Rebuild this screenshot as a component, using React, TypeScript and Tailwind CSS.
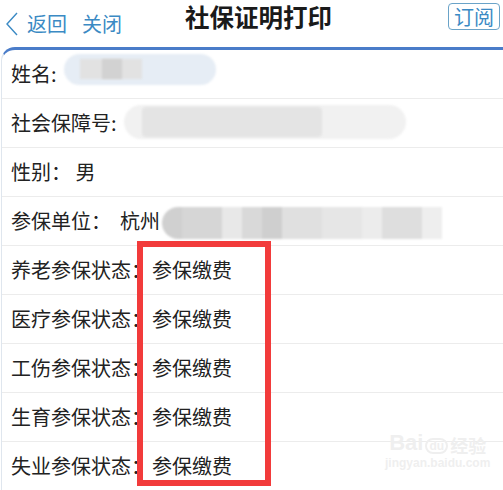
import React from "react";

const font = { fontFamily: '"Noto Sans CJK SC", "Noto Sans", sans-serif' };

function Row({ children, className = "" }: { children: React.ReactNode; className?: string }) {
  return (
    <div className={`relative flex h-[49px] items-center border-b border-[#ececec] pl-[9px] text-[20px] text-[#222] ${className}`}>
      {children}
    </div>
  );
}

export default function App() {
  const statuses = ["养老参保状态：", "医疗参保状态：", "工伤参保状态：", "生育参保状态：", "失业参保状态："];
  return (
    <div className="relative h-[490px] w-[503px] overflow-hidden bg-white" style={font}>
      {/* header */}
      <div className="relative flex h-[47px] items-center">
        <div className="flex items-center pl-[5px] text-[20px] text-[#3b8ac4]">
          <svg width="14" height="24" viewBox="0 0 14 24" className="mr-[8px]">
            <path d="M12 1 L2 12 L12 23" fill="none" stroke="#3b8ac4" strokeWidth="1.4" />
          </svg>
          <span className="leading-none">返回</span>
          <span className="ml-[15px] leading-none">关闭</span>
        </div>
        <div className="absolute left-[185px] top-[1px] text-[24.5px] font-bold leading-[32px] text-[#1a1a1a]">社保证明打印</div>
        <div className="absolute right-[3px] top-[3px] flex h-[27px] w-[52px] items-center justify-center rounded-[4px] border border-[#6aa3c8] text-[20px] leading-none text-[#3b8ac4]">
          订阅
        </div>
      </div>

      {/* content */}
      <div className="ml-[1px] rounded-tl-[14px] border-l border-t-[3px] border-l-[#dfe6ee] border-t-[#4a7cc9]">
        <Row>
          <span>姓名:</span>
          <div className="absolute left-[62px] top-[4px] h-[31px] w-[152px] rounded-full bg-[#e6edf5] blur-[1px]" />
          <div className="absolute left-[78px] top-[9px] h-[20px] w-[62px] bg-[#e2e2e2] blur-[1px]" />
          <div className="absolute left-[100px] top-[9px] h-[20px] w-[20px] bg-[#d2d2d2] blur-[1px]" />
        </Row>
        <Row>
          <span>社会保障号:</span>
          <div className="absolute left-[122px] top-[6px] h-[34px] w-[282px] rounded-full bg-[#f1f1f1] blur-[1px]" />
          <div className="absolute left-[140px] top-[8px] h-[30px] w-[180px] rounded-[4px] bg-[#e4e4e4] blur-[1px]" />
        </Row>
        <Row>
          <span>性别：&nbsp;男</span>
        </Row>
        <Row>
          <span>参保单位：&nbsp;&nbsp;杭州</span>
          <div className="absolute left-[160px] top-[10px] flex h-[32px] w-[280px] overflow-hidden rounded-l-full blur-[1px]">
            <div className="w-[20px] bg-[#d0d0d0]" />
            <div className="w-[40px] bg-[#d6d6d6]" />
            <div className="w-[20px] bg-[#e8e8e8]" />
            <div className="w-[20px] bg-[#d9d9d9]" />
            <div className="w-[20px] bg-[#cfcfcf]" />
            <div className="w-[40px] bg-[#e0e0e0]" />
            <div className="w-[40px] bg-[#e6e6e6]" />
            <div className="w-[20px] bg-[#ececec]" />
            <div className="w-[40px] bg-[#dedede]" />
            <div className="w-[20px] bg-[#eeeeee]" />
          </div>
        </Row>
        {statuses.map((s) => (
          <Row key={s}>
            <span>{s}</span>
            <span className="absolute left-[150px]">参保缴费</span>
          </Row>
        ))}
      </div>

      {/* red highlight */}
      <div className="absolute left-[137px] top-[241px] h-[245px] w-[134px] border-[6px] border-[#f23b3b]" />

      {/* watermark */}
      <div className="absolute left-[385px] top-[432px] flex flex-col items-center text-[#efefef]">
        <div className="flex items-end text-[22px] font-bold leading-none" style={{ fontFamily: '"Liberation Sans", sans-serif' }}>
          <span>Bai</span>
          <span className="mx-[2px] rounded-full border-2 border-[#efefef] px-[2px] text-[12px]">du</span>
          <span className="text-[18px]" style={font}>经验</span>
        </div>
        <div className="mt-[3px] text-[12px] font-bold leading-none" style={{ fontFamily: '"Liberation Sans", sans-serif' }}>jingyan.baidu.com</div>
      </div>
    </div>
  );
}
